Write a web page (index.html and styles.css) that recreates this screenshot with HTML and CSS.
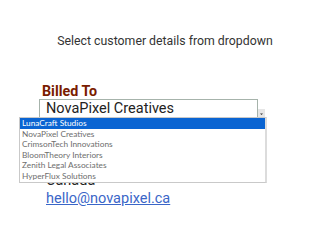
FILE: index.html
```html
<!DOCTYPE html>
<html>
<head>
<meta charset="utf-8">
<link rel="stylesheet" href="styles.css">
</head>
<body>
<div class="page">
  <p class="hint">Select customer details from dropdown</p>
  <section class="bill">
    <div class="label">Billed To</div>
    <div class="picker">
      <div class="current">NovaPixel Creatives</div>
      <span class="arrow"><svg width="7" height="8" viewBox="0 0 7 8"><path d="M2 3.5h3L3.5 5z" fill="#333"/></svg></span>
      <ul class="menu">
        <li class="on">LunaCraft Studios</li>
        <li>NovaPixel Creatives</li>
        <li>CrimsonTech Innovations</li>
        <li>BloomTheory Interiors</li>
        <li>Zenith Legal Associates</li>
        <li>HyperFlux Solutions</li>
      </ul>
    </div>
    <div class="address">
      <div>Canada</div>
      <a href="#" class="mail">hello@novapixel.ca</a>
    </div>
  </section>
</div>
</body>
</html>
```

FILE: styles.css
```css
body {
  margin: 0;
  background: #fff;
  font-family: Roboto, "Liberation Sans", sans-serif;
}
.page {
  padding-top: 33px;
}
.hint {
  margin: 0;
  text-align: center;
  font-size: 12.3px;
  line-height: 16px;
  color: #333;
}
.bill {
  margin-top: 34px;
  padding-left: 42px;
}
.label {
  font-weight: bold;
  font-size: 14.3px;
  line-height: 16px;
  color: #7a1c00;
}
.picker {
  position: relative;
  margin-left: -3px;
  width: 217px;
  height: 17px;
  border: 1px solid #a6b3ab;
}
.current {
  padding-left: 6px;
  font-size: 14.5px;
  line-height: 18px;
  color: #222;
}
.arrow {
  position: absolute;
  right: -8px;
  top: 9px;
  width: 7px;
  height: 9px;
  background: #e6e6e6;
  display: flex;
  align-items: center;
  justify-content: center;
}
.menu {
  position: absolute;
  left: -21px;
  top: 17px;
  width: 245px;
  margin: 0;
  padding: 0;
  list-style: none;
  background: #fff;
  border: 1px solid #c9c9c9;
  border-right: 2px solid #dcdcdc;
  font-family: Lato, "Open Sans", sans-serif;
  font-size: 8.3px;
  color: #6e6e6e;
  z-index: 2;
}
.menu li {
  height: 10.6px;
  line-height: 10.6px;
  padding-left: 2px;
  white-space: nowrap;
}
.menu li.on {
  background: #0a64d2;
  color: #fff;
}
.address {
  padding-top: 54px;
  padding-left: 4px;
  font-size: 14.5px;
  line-height: 18px;
  color: #222;
}
.mail {
  color: #3a66c8;
  text-decoration: underline;
}
```
